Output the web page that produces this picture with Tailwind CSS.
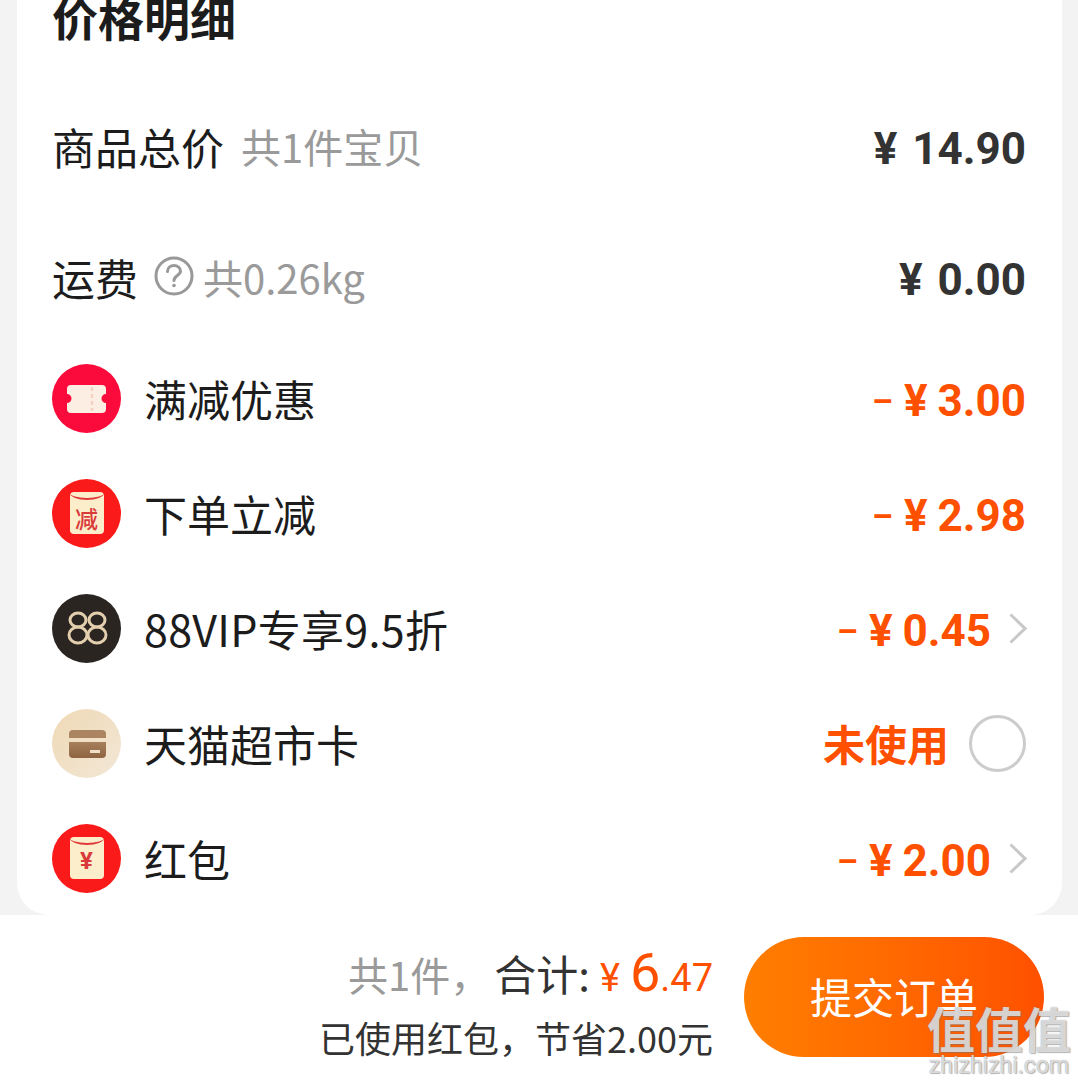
<!DOCTYPE html>
<html lang="zh-CN">
<head>
<meta charset="UTF-8">
<title>价格明细</title>
<script src="https://cdn.jsdelivr.net/npm/@tailwindcss/browser@4"></script>
</head>
<body class="bg-[#f3f3f3] font-['Noto_Sans_CJK_SC','Noto_Sans',sans-serif]">
<div class="relative w-[1078px] h-[1084px] overflow-hidden flex flex-col">

  <!-- card -->
  <div class="ml-[17px] w-[1045px] h-[915px] shrink-0 bg-white rounded-b-[32px] pl-[35px] pr-[36px]">
    <div class="h-[36px] -mt-[2px] flex items-center text-[46px] font-bold text-[#1c1c1c] leading-none">价格明细</div>

    <div class="h-[110px] mt-[57px] flex items-center justify-between">
      <div class="flex items-center">
        <span class="text-[43px] text-[#1c1c1c] leading-none">商品总价</span>
        <span class="ml-[17px] text-[40px] text-[#9a9a9a] leading-none">共1件宝贝</span>
      </div>
      <span class="mt-[6px] flex items-center text-[44px] font-bold text-[#333] leading-none font-['Roboto']"><span class="mr-[15px]">¥</span>14.90</span>
    </div>

    <div class="h-[110px] mt-[21px] mb-[11px] flex items-center justify-between">
      <div class="flex items-center">
        <span class="text-[43px] text-[#1c1c1c] leading-none">运费</span>
        <svg class="ml-[16px] -mt-[2px]" width="40" height="40" viewBox="0 0 40 40" fill="none" stroke="#999" stroke-width="3">
          <circle cx="20" cy="20" r="18"/>
          <path d="M13.500 15.500c0-3.800 3-6 6.500-6s6.500 2.300 6.500 5.500c0 4.500-6.500 4.500-6.500 9.500" stroke-linecap="round"/>
          <circle cx="20" cy="29.500" r="1.800" fill="#999" stroke="none"/>
        </svg>
        <span class="ml-[9px] text-[40px] text-[#9a9a9a] leading-none">共0.26kg</span>
      </div>
      <span class="mt-[6px] flex items-center text-[44px] font-bold text-[#333] leading-none font-['Roboto']"><span class="mr-[15px]">¥</span>0.00</span>
    </div>

    <div class="flex flex-col gap-[5px]">
      <div class="h-[110px] flex items-center justify-between">
        <div class="flex items-center gap-[23px]">
          <svg width="69" height="69" viewBox="0 0 69 69">
            <circle cx="34.500" cy="34.500" r="34.500" fill="#fb0a3c"/>
            <path d="M19 21h31a4 4 0 0 1 4 4v5a4 4 0 0 0 0 9v6a4 4 0 0 1-4 4H19a4 4 0 0 1-4-4v-6a4 4 0 0 0 0-9v-5a4 4 0 0 1 4-4z" fill="#fdeee4"/>
            <path d="M40 23v24" stroke="#f3d2c4" stroke-width="2.500" stroke-dasharray="4 3"/>
          </svg>
          <span class="text-[43px] text-[#1c1c1c] leading-none">满减优惠</span>
        </div>
        <span class="mt-[6px] flex items-center text-[44px] font-bold text-[#ff5000] leading-none font-['Roboto']"><span class="mr-[11px] text-[33px]">–</span><span class="mr-[10px]">¥</span>3.00</span>
      </div>

      <div class="h-[110px] flex items-center justify-between">
        <div class="flex items-center gap-[23px]">
          <div class="relative w-[69px] h-[69px] rounded-full bg-[#fb1a1a] flex items-center justify-center">
            <div class="relative w-[34px] h-[42px] rounded-[4px] bg-[#fdeecb] overflow-hidden flex items-end justify-center pb-[4px]">
              <div class="absolute left-0 right-0 -top-[6px] h-[14px] rounded-b-[50%] border-b-[2px] border-[#e0393a]"></div>
              <span class="text-[23px] font-medium leading-none text-[#d93a3a]">减</span>
            </div>
          </div>
          <span class="text-[43px] text-[#1c1c1c] leading-none">下单立减</span>
        </div>
        <span class="mt-[6px] flex items-center text-[44px] font-bold text-[#ff5000] leading-none font-['Roboto']"><span class="mr-[11px] text-[33px]">–</span><span class="mr-[10px]">¥</span>2.98</span>
      </div>

      <div class="h-[110px] flex items-center justify-between">
        <div class="flex items-center gap-[23px]">
          <svg width="69" height="69" viewBox="0 0 69 69">
            <circle cx="34.500" cy="34.500" r="34.500" fill="#2b2522"/>
            <g fill="none" stroke="#e3cfae" stroke-width="3">
              <ellipse cx="26" cy="26" rx="8" ry="7"/>
              <ellipse cx="26" cy="41" rx="9" ry="8"/>
              <ellipse cx="45" cy="26" rx="8" ry="7"/>
              <ellipse cx="45" cy="41" rx="9" ry="8"/>
            </g>
          </svg>
          <span class="text-[43px] tracking-[0.3px] text-[#1c1c1c] leading-none">88VIP专享9.5折</span>
        </div>
        <div class="flex items-center -mr-[1px]">
          <span class="mt-[6px] flex items-center text-[44px] font-bold text-[#ff5000] leading-none font-['Roboto']"><span class="mr-[11px] text-[33px]">–</span><span class="mr-[10px]">¥</span>0.45</span>
          <svg class="ml-[18px] mt-[1px]" width="18" height="31" viewBox="0 0 18 31" fill="none" stroke="#c8c8c8" stroke-width="3"><path d="M1.500 1.500 16 15.500 1.500 29.500"/></svg>
        </div>
      </div>

      <div class="h-[110px] flex items-center justify-between">
        <div class="flex items-center gap-[23px]">
          <svg width="69" height="69" viewBox="0 0 69 69">
            <defs><linearGradient id="cardBg" x1="0" y1="0" x2="1" y2="1"><stop offset="0" stop-color="#efd9b5"/><stop offset="1" stop-color="#f2e7d6"/></linearGradient>
            <linearGradient id="cardFg" x1="0" y1="0" x2="0" y2="1"><stop offset="0" stop-color="#a77f5b"/><stop offset="1" stop-color="#8e6540"/></linearGradient></defs>
            <circle cx="34.500" cy="34.500" r="34.500" fill="url(#cardBg)"/>
            <path d="M17 29v-4a4 4 0 0 1 4-4h29a4 4 0 0 1 4 4v4z" fill="#ab8561"/>
            <path d="M17 33h37v12a4 4 0 0 1-4 4H21a4 4 0 0 1-4-4z" fill="url(#cardFg)"/>
            <rect x="38" y="41" width="10" height="3" fill="#f0e0c8"/>
          </svg>
          <span class="text-[43px] text-[#1c1c1c] leading-none">天猫超市卡</span>
        </div>
        <div class="flex items-center">
          <span class="text-[42px] font-bold text-[#ff5000] leading-none">未使用</span>
          <div class="ml-[20px] w-[57px] h-[57px] rounded-full border-[3px] border-[#cccccc]"></div>
        </div>
      </div>

      <div class="h-[110px] flex items-center justify-between">
        <div class="flex items-center gap-[23px]">
          <div class="relative w-[69px] h-[69px] rounded-full bg-[#fb1a1a] flex items-center justify-center">
            <div class="relative w-[34px] h-[42px] rounded-[4px] bg-[#fdeecb] overflow-hidden flex items-end justify-center pb-[6px]">
              <div class="absolute left-0 right-0 -top-[6px] h-[14px] rounded-b-[50%] border-b-[2px] border-[#e0393a]"></div>
              <span class="text-[24px] font-bold leading-none text-[#d93a3a] font-['Roboto']">¥</span>
            </div>
          </div>
          <span class="text-[43px] text-[#1c1c1c] leading-none">红包</span>
        </div>
        <div class="flex items-center -mr-[1px]">
          <span class="mt-[6px] flex items-center text-[44px] font-bold text-[#ff5000] leading-none font-['Roboto']"><span class="mr-[11px] text-[33px]">–</span><span class="mr-[10px]">¥</span>2.00</span>
          <svg class="ml-[18px] mt-[1px]" width="18" height="31" viewBox="0 0 18 31" fill="none" stroke="#c8c8c8" stroke-width="3"><path d="M1.500 1.500 16 15.500 1.500 29.500"/></svg>
        </div>
      </div>
    </div>
  </div>

  <!-- footer -->
  <div class="flex-1 bg-white pt-[22px] pl-[320px] pr-[34px] flex justify-between">
    <div class="flex flex-col items-end w-[393px] pt-[9px]">
      <div class="flex items-baseline leading-none">
        <span class="text-[40px] text-[#9a9a9a]">共1件，</span>
        <span class="ml-[4px] text-[42px] text-[#333]">合计:</span>
        <span class="ml-[10px] text-[38px] text-[#ff5000] font-['Roboto']">¥</span>
        <span class="ml-[10px] text-[54px] text-[#ff5000] font-['Roboto']">6</span>
        <span class="text-[38px] text-[#ff5000] font-['Roboto']">.47</span>
      </div>
      <div class="mt-[19px] text-[36px] text-[#333] leading-none whitespace-nowrap">已使用红包，节省2.00元</div>
    </div>
    <div class="w-[300px] h-[120px] pb-[3px] rounded-full bg-gradient-to-r from-[#ff7e00] to-[#ff5000] flex items-center justify-center text-[42px] text-white">提交订单</div>
  </div>

  <!-- watermark -->
  <div class="absolute left-[924px] top-[1002px] w-[150px] flex flex-col items-center text-white/70 [text-shadow:0_0_1px_rgba(110,110,110,0.8),1px_1px_1px_rgba(120,120,120,0.5)]">
    <div class="text-[48px] leading-[50px] whitespace-nowrap font-bold">值值值</div>
    <div class="text-[23px] leading-[22px] mt-[3px] font-['Roboto'] whitespace-nowrap">zhizhizhi.com</div>
  </div>
</div>
</body>
</html>
